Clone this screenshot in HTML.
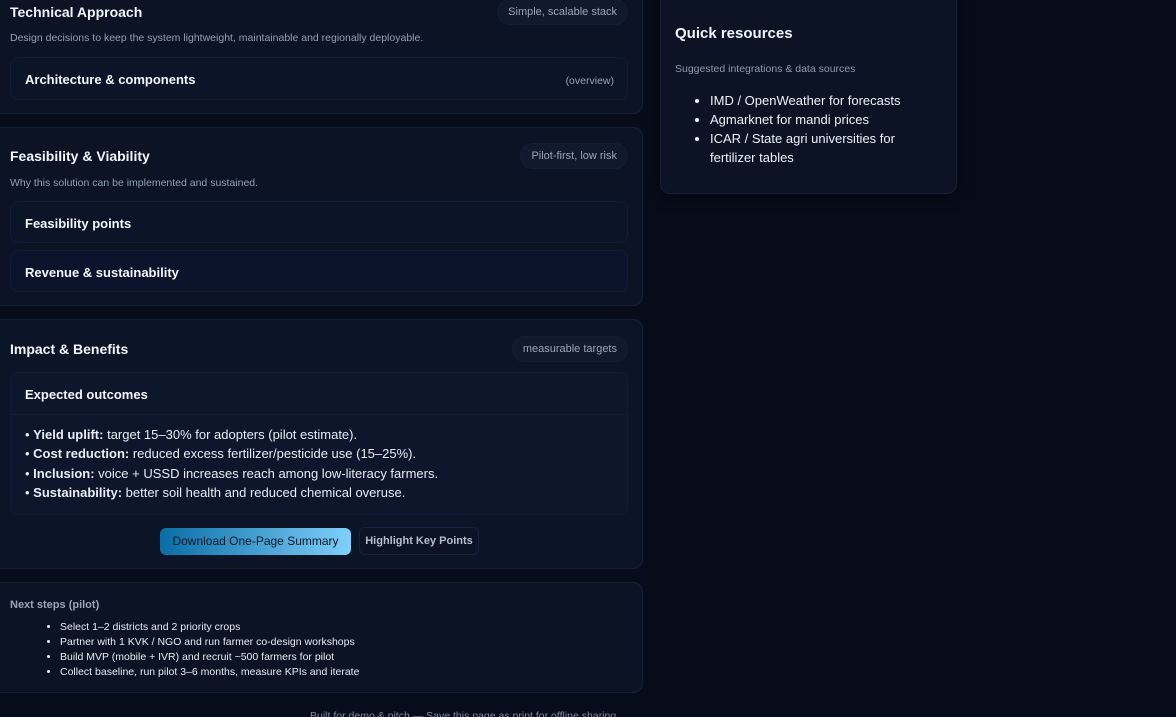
<!DOCTYPE html>
<html><head><meta charset="utf-8"><style>
*{box-sizing:border-box;margin:0;padding:0}
html,body{width:1176px;height:717px;overflow:hidden}
body{background:#070c1a;font-family:"Liberation Sans","DejaVu Sans",sans-serif;color:#e6edf7;position:relative}
.card{position:absolute;background:#0b1324;border:1px solid #152038;border-radius:10px}
.h{position:absolute;font-weight:bold;font-size:14px;color:#f1f5fb}
.pill{position:absolute;background:#111a2c;border:1px solid #141e34;border-radius:14px;font-size:11px;color:#9aa6b8;height:26px;line-height:24px;padding:0 10px;white-space:nowrap}
.sub{position:absolute;font-size:10.5px;color:#93a0b4}
.inner{position:absolute;background:#0c1427;border:1px solid #121c32;border-radius:8px}
.ih{position:absolute;left:14px;font-weight:bold;font-size:13px;color:#f3f6fb}
</style></head><body>

<div class="card" style="left:-10px;top:-20px;width:653px;height:134px"></div>
<div class="h" style="left:10px;top:4px">Technical Approach</div>
<div class="pill" style="right:548px;top:-1px">Simple, scalable stack</div>
<div class="sub" style="left:10px;top:32px">Design decisions to keep the system lightweight, maintainable and regionally deployable.</div>
<div class="inner" style="top:57px;left:10px;width:618px;height:43px">
<div class="ih" style="top:14px">Architecture &amp; components</div>
<div style="position:absolute;right:13px;top:17px;font-size:10.5px;color:#9aa6b8">(overview)</div></div>

<div class="card" style="left:-10px;top:127px;width:653px;height:179px"></div>
<div class="h" style="left:10px;top:148px">Feasibility &amp; Viability</div>
<div class="pill" style="right:548px;top:143px">Pilot-first, low risk</div>
<div class="sub" style="left:10px;top:177px">Why this solution can be implemented and sustained.</div>
<div class="inner" style="top:201px;left:10px;width:618px;height:42px"><div class="ih" style="top:14px">Feasibility points</div></div>
<div class="inner" style="top:250px;left:10px;width:618px;height:42px;background:#0c142c"><div class="ih" style="top:14px">Revenue &amp; sustainability</div></div>

<div class="card" style="left:-10px;top:319px;width:653px;height:250px;background:#0c1528"></div>
<div class="h" style="left:10px;top:341px">Impact &amp; Benefits</div>
<div class="pill" style="right:548px;top:336px">measurable targets</div>
<div class="inner" style="top:372px;left:10px;width:618px;height:143px;background:#0d162b">
<div class="ih" style="top:14px">Expected outcomes</div>
<div style="position:absolute;left:0;right:0;top:41px;border-top:1px solid #131d33"></div>
<div style="position:absolute;left:14px;top:52px;font-size:13px;line-height:19.3px;color:#e8edf5">
• <b>Yield uplift:</b> target 15–30% for adopters (pilot estimate).<br>
• <b>Cost reduction:</b> reduced excess fertilizer/pesticide use (15–25%).<br>
• <b>Inclusion:</b> voice + USSD increases reach among low-literacy farmers.<br>
• <b>Sustainability:</b> better soil health and reduced chemical overuse.</div></div>
<div style="position:absolute;left:160px;top:528px;width:191px;height:27px;border-radius:6px;background:linear-gradient(90deg,#0a6da6,#80d0fa);color:#0b1a2e;font-size:12px;line-height:27px;text-align:center">Download One-Page Summary</div>
<div style="position:absolute;left:359px;top:527px;width:120px;height:28px;border-radius:6px;border:1px solid #18233b;background:#0b1324;color:#b5bfcd;font-size:11px;font-weight:bold;line-height:27px;text-align:center">Highlight Key Points</div>

<div class="card" style="left:-10px;top:582px;width:653px;height:111px"></div>
<div style="position:absolute;left:10px;top:599px;font-size:11px;font-weight:bold;color:#9aa6b8">Next steps (pilot)</div>
<ul style="position:absolute;left:60px;top:620px;font-size:10.5px;line-height:15px;color:#e6ecf5;list-style:disc">
<li>Select 1–2 districts and 2 priority crops</li>
<li>Partner with 1 KVK / NGO and run farmer co-design workshops</li>
<li>Build MVP (mobile + IVR) and recruit ~500 farmers for pilot</li>
<li>Collect baseline, run pilot 3–6 months, measure KPIs and iterate</li></ul>
<div style="position:absolute;left:310px;top:710px;font-size:10.5px;color:#7f8ba0;white-space:nowrap">Built for demo &amp; pitch — Save this page as print for offline sharing</div>

<div class="card" style="left:660px;top:-20px;width:297px;height:214px;box-shadow:0 4px 14px rgba(0,0,0,.4)"></div>
<div style="position:absolute;left:675px;top:25px;font-size:15px;font-weight:bold;color:#f1f5fb">Quick resources</div>
<div style="position:absolute;left:675px;top:63px;font-size:10.5px;color:#8e9ab0">Suggested integrations &amp; data sources</div>
<ul style="position:absolute;left:710px;top:91px;width:230px;font-size:13px;line-height:19px;color:#eef2f8;list-style:disc">
<li>IMD / OpenWeather for forecasts</li>
<li>Agmarknet for mandi prices</li>
<li>ICAR / State agri universities for fertilizer tables</li></ul>
</body></html>
